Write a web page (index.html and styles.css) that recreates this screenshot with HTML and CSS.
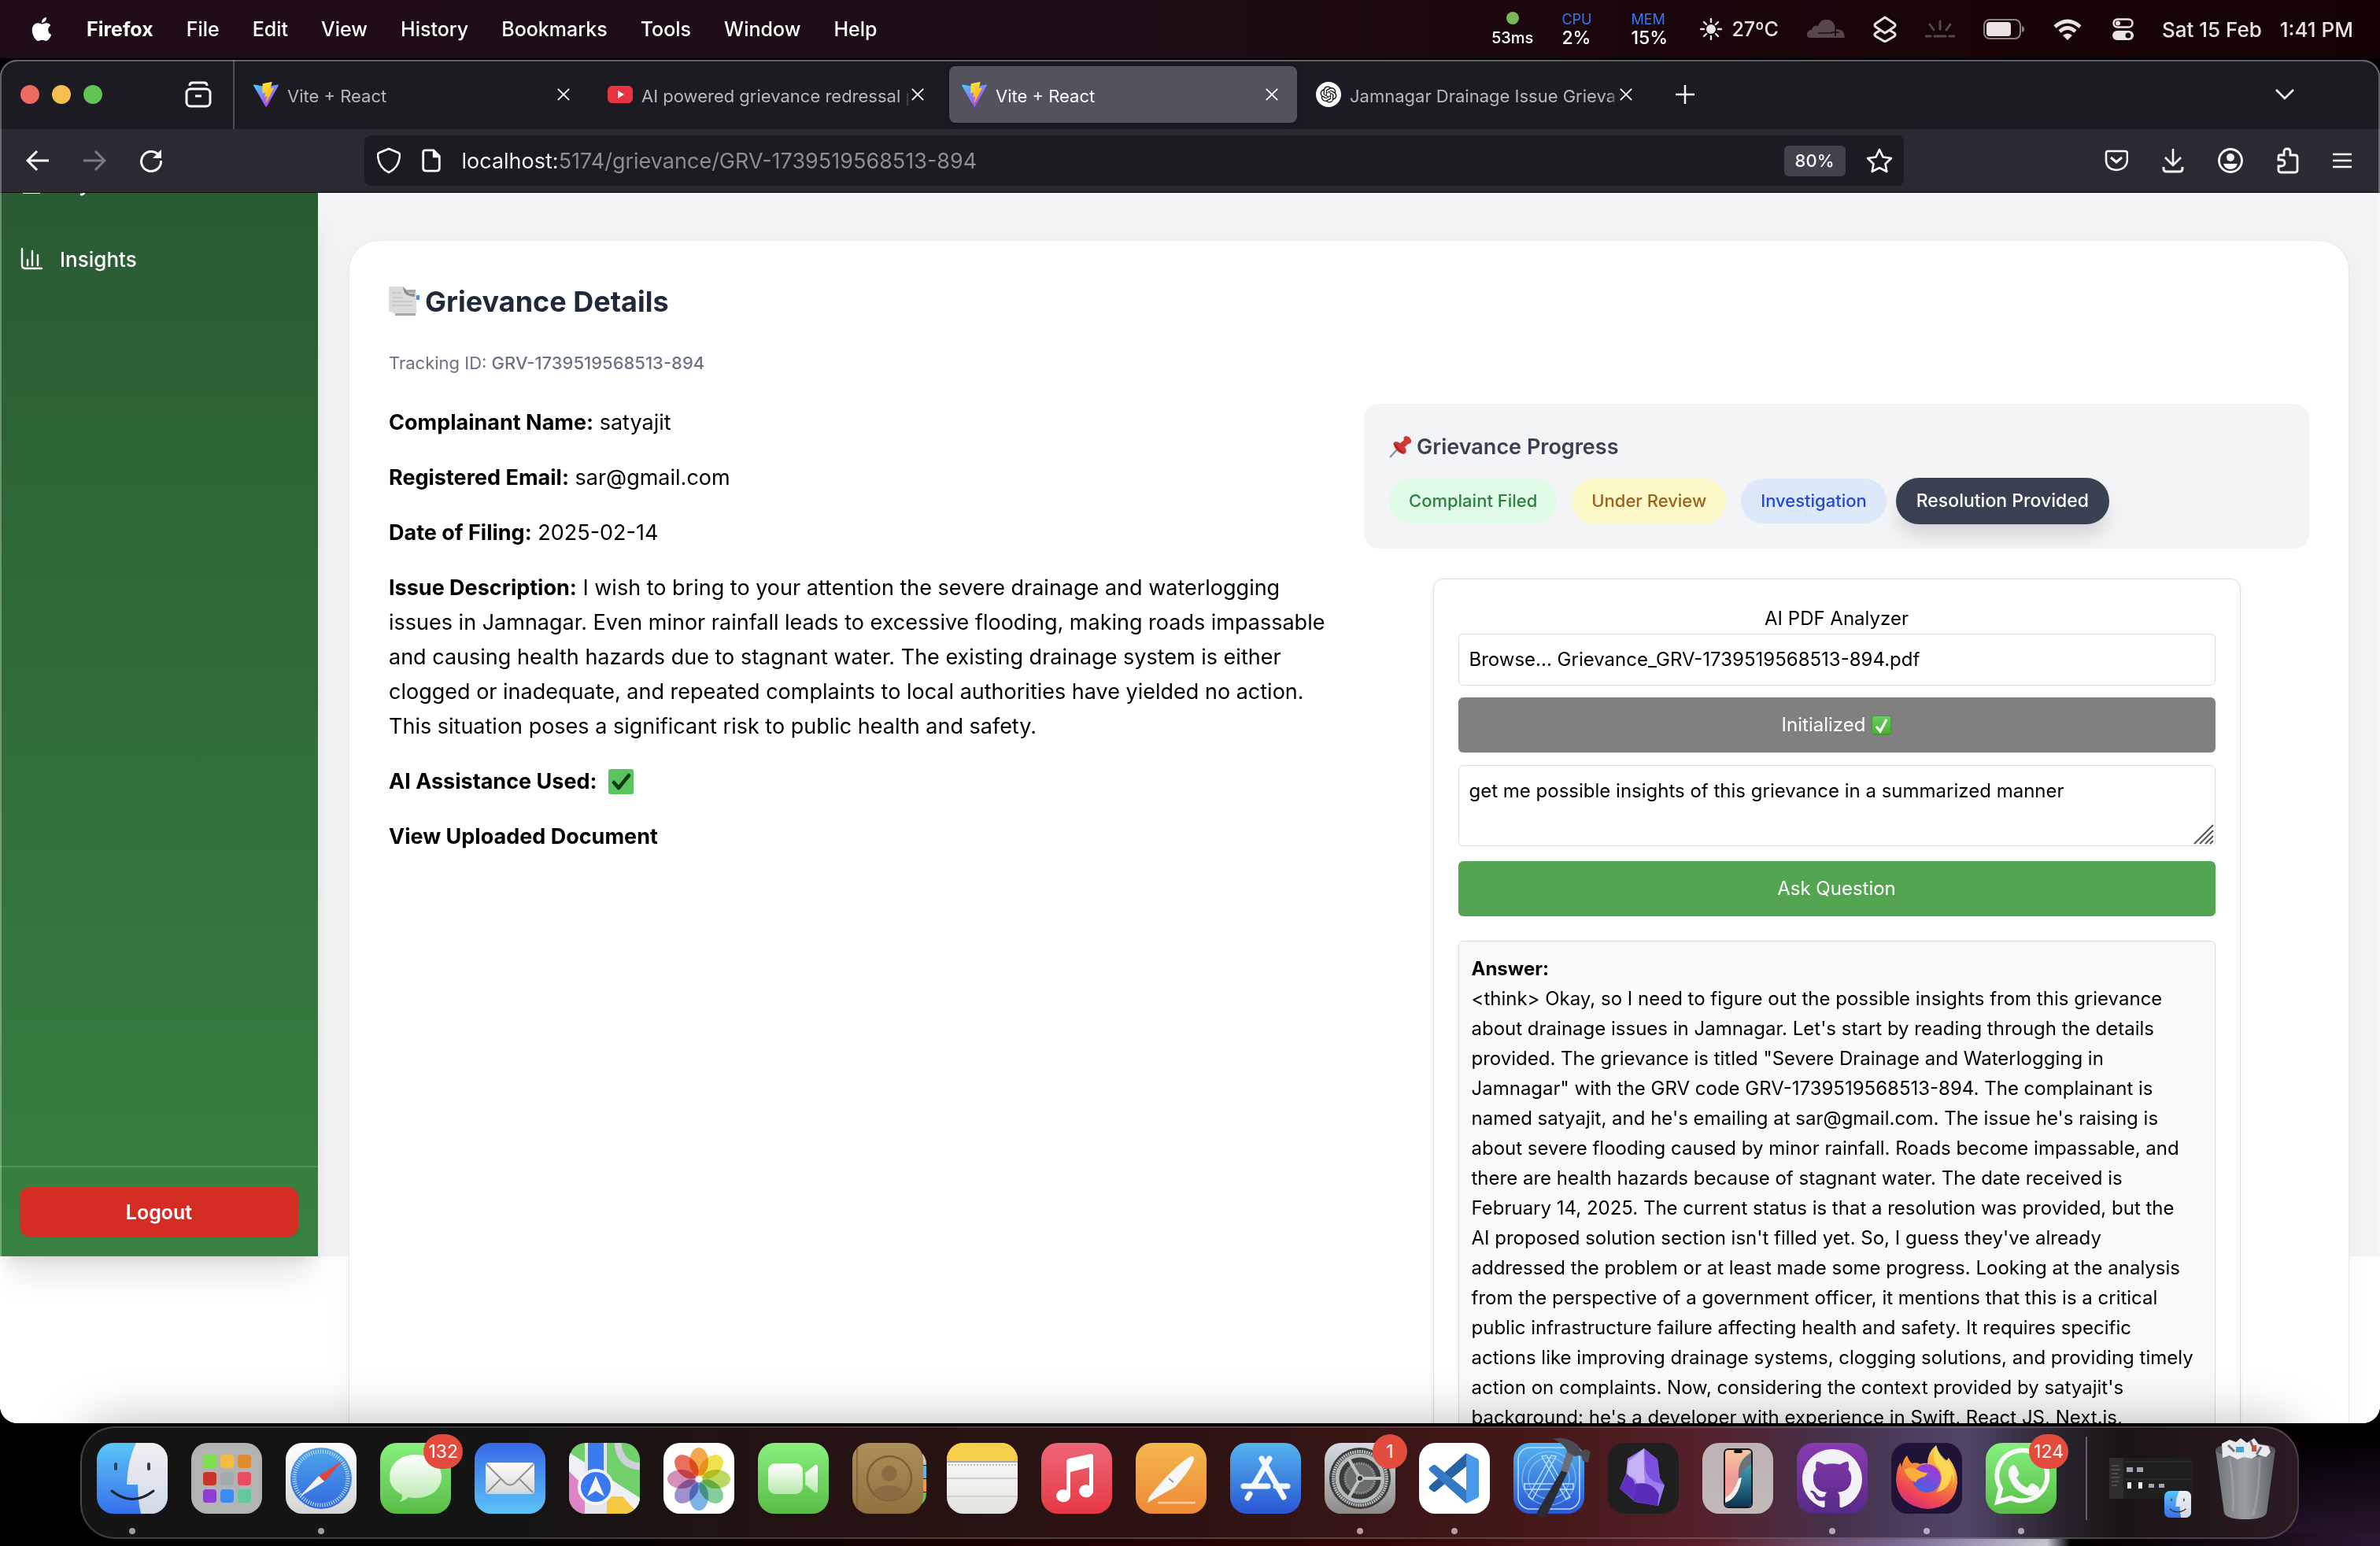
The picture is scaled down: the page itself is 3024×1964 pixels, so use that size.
FILE: index.html
```html
<!DOCTYPE html>
<html lang="en">
<head>
<meta charset="utf-8">
<title>Vite + React</title>
<link rel="stylesheet" href="styles.css">
</head>
<body>
<svg class="defs" aria-hidden="true">
  <defs>
    <linearGradient id="vite-a" x1="0" y1="0" x2="0.7" y2="1"><stop offset="0" stop-color="#41d1ff"/><stop offset="1" stop-color="#bd34fe"/></linearGradient>
    <linearGradient id="vite-b" x1="0.4" y1="0" x2="0.6" y2="1"><stop offset="0" stop-color="#ffea83"/><stop offset="0.1" stop-color="#ffdd35"/><stop offset="1" stop-color="#ffa800"/></linearGradient>
    <symbol id="vite" viewBox="0 0 256 257">
      <path fill="url(#vite-a)" d="M255.153 37.938L134.897 252.976c-2.483 4.44-8.862 4.466-11.382.048L.875 37.958c-2.746-4.814 1.371-10.646 6.827-9.67l120.385 21.517a6.537 6.537 0 0 0 2.322-.004l117.867-21.483c5.438-.991 9.574 4.796 6.877 9.62Z"/>
      <path fill="url(#vite-b)" d="M185.432.063L96.44 17.501a3.268 3.268 0 0 0-2.634 3.014l-5.474 92.456a3.268 3.268 0 0 0 3.997 3.378l24.777-5.718c2.318-.535 4.413 1.507 3.936 3.838l-7.361 36.047c-.495 2.426 1.782 4.5 4.151 3.78l15.304-4.649c2.372-.72 4.652 1.36 4.15 3.788l-11.698 56.621c-.732 3.542 3.979 5.473 5.943 2.437l1.313-2.028l72.516-144.72c1.215-2.423-.88-5.186-3.54-4.672l-25.505 4.922c-2.396.462-4.435-1.77-3.759-4.114l16.646-57.705c.677-2.35-1.37-4.583-3.769-4.113Z"/>
    </symbol>
    <symbol id="close" viewBox="0 0 20 20"><path d="M2 2l16 16M18 2L2 18" stroke="#fbfbfe" stroke-width="2" fill="none"/></symbol>
    <linearGradient id="sky" x1="0" y1="0" x2="0" y2="1"><stop offset="0" stop-color="#5bc5f8"/><stop offset="1" stop-color="#376fea"/></linearGradient>
    <linearGradient id="pale" x1="0" y1="0" x2="0" y2="1"><stop offset="0" stop-color="#f1f0f1"/><stop offset="1" stop-color="#d0d9e7"/></linearGradient>
    <symbol id="finder" viewBox="0 0 90 90">
      <path fill="url(#sky)" d="M0 0h90v90H0z"/>
      <path fill="url(#pale)" d="M50 0h40v90H56q-4-18-4-37H38Q39 22 50 0z"/>
      <path d="M24 27v6M66 27v6" stroke="#333c48" stroke-width="4" stroke-linecap="round"/>
      <path d="M19 61q26 21 53 0" fill="none" stroke="#16222e" stroke-width="3" stroke-linecap="round"/>
    </symbol>
    <linearGradient id="white-fade" x1="0" y1="0" x2="0" y2="1"><stop offset="0" stop-color="#fff"/><stop offset="1" stop-color="#b9e9ae"/></linearGradient>
    <linearGradient id="envelope" x1="0" y1="0" x2="0" y2="1"><stop offset="0" stop-color="#fff"/><stop offset="1" stop-color="#d5d5d6"/></linearGradient>
    <linearGradient id="dial" x1="0" y1="0" x2="0" y2="1"><stop offset="0" stop-color="#4ba5ea"/><stop offset="1" stop-color="#3569de"/></linearGradient>
    <linearGradient id="phone" x1="0" y1="0" x2="0" y2="1"><stop offset="0" stop-color="#f7c8a2"/><stop offset="0.5" stop-color="#ee9896"/><stop offset="1" stop-color="#f3a9a0"/></linearGradient>
    <linearGradient id="phone-b" x1="0" y1="0" x2="0" y2="1"><stop offset="0" stop-color="#4fc0cf"/><stop offset="1" stop-color="#0e3454"/></linearGradient>
    <linearGradient id="fox" x1="0.8" y1="0" x2="0.3" y2="1"><stop offset="0" stop-color="#fde455"/><stop offset="0.45" stop-color="#f78a35"/><stop offset="0.8" stop-color="#ee4455"/><stop offset="1" stop-color="#d32f7a"/></linearGradient>
    <linearGradient id="globe" x1="0.7" y1="0" x2="0.3" y2="1"><stop offset="0" stop-color="#a936d6"/><stop offset="1" stop-color="#4463dd"/></linearGradient>
    <linearGradient id="bin" x1="0" y1="0" x2="1" y2="0"><stop offset="0" stop-color="#6f7476"/><stop offset="0.5" stop-color="#9a9ea0"/><stop offset="1" stop-color="#5d6163"/></linearGradient>
    <linearGradient id="cell" x1="0" y1="0" x2="0" y2="1"><stop offset="0" stop-color="#65cf68"/><stop offset="1" stop-color="#51ac33"/></linearGradient>
  </defs>
</svg>

<header class="menubar">
  <nav class="menus" aria-label="Application menu">
    <button class="menu apple" aria-label="Apple menu"><svg viewBox="0 0 24 24" width="30" height="32"><path fill="#fff" d="M12.152 6.896c-.948 0-2.415-1.078-3.96-1.04-2.04.027-3.91 1.183-4.961 3.014-2.117 3.675-.546 9.103 1.519 12.09 1.013 1.454 2.208 3.09 3.792 3.039 1.52-.065 2.09-.987 3.935-.987 1.831 0 2.35.987 3.96.948 1.637-.026 2.676-1.48 3.676-2.948 1.156-1.688 1.636-3.325 1.662-3.415-.039-.013-3.182-1.221-3.22-4.857-.026-3.04 2.48-4.494 2.597-4.559-1.429-2.09-3.623-2.324-4.39-2.376-2-.156-3.675 1.09-4.61 1.09zM15.53 3.83c.843-1.012 1.4-2.427 1.245-3.83-1.207.052-2.662.805-3.532 1.818-.78.896-1.454 2.338-1.273 3.714 1.338.104 2.715-.688 3.559-1.701"/></svg></button>
    <button class="menu menu-app">Firefox</button>
    <button class="menu">File</button>
    <button class="menu">Edit</button>
    <button class="menu">View</button>
    <button class="menu">History</button>
    <button class="menu">Bookmarks</button>
    <button class="menu">Tools</button>
    <button class="menu">Window</button>
    <button class="menu">Help</button>
  </nav>
  <div class="status">
    <div class="stat stat-ping"><span class="ping-dot"></span><span class="ping">53ms</span></div>
    <div class="stat"><span class="stat-name">CPU</span><span class="stat-value">2%</span></div>
    <div class="stat"><span class="stat-name">MEM</span><span class="stat-value">15%</span></div>
    <div class="weather">
      <svg width="28" height="28" viewBox="0 0 28 28"><circle cx="14" cy="14" r="6" fill="#e9e3e4"/><path d="M14 1v4M14 23v4M1 14h4M23 14h4M5 5l3 3M20 20l3 3M5 23l3-3M20 8l3-3" stroke="#e9e3e4" stroke-width="2.4" stroke-linecap="round"/></svg>
      <span>27ºC</span>
    </div>
    <svg width="48" height="24" viewBox="0 0 48 24"><path fill="#55484b" d="M4 23a4 4 0 0 1-3-7 4 4 0 0 1 5-3A6 6 0 0 1 14 8a11 11 0 0 1 21-1l1 5q10 0 11 6l1 5z"/><path d="M14 17h18M36 11v10M31 16h10" stroke="#1c080d" stroke-width="1.6"/></svg>
    <svg width="30" height="34" viewBox="0 0 30 34"><g fill="none" stroke="#e9e3e4" stroke-width="3" stroke-linejoin="round"><path d="M15 2l12 8q2 2 0 4l-12 8-12-8q-2-2 0-4z"/><path d="M10 18l-7 4q-2 2 0 4l12 7 12-7q2-2 0-4l-7-4"/></g></svg>
    <svg width="38" height="24" viewBox="0 0 38 24"><path d="M19 2v10M6 6l5 7M32 6l-5 7M1 21h6M12 21h14M31 21h6" stroke="#55484b" stroke-width="3" stroke-linecap="round"/></svg>
    <svg width="52" height="26" viewBox="0 0 52 26"><rect x="1" y="1" width="46" height="24" rx="7" fill="none" stroke="#8a7f82" stroke-width="2"/><rect x="4" y="4" width="31" height="18" rx="4" fill="#e9e3e4"/><path d="M49 9q3 1 3 4t-3 4z" fill="#8a7f82"/></svg>
    <svg width="40" height="28" viewBox="0 0 40 28"><g fill="none" stroke="#e9e3e4" stroke-width="4.6"><path d="M3 11q16-14 32 0"/><path d="M9 17q10-9 20 0"/></g><path fill="#e9e3e4" d="M13 22q6-5 12 0l-6 6z"/></svg>
    <svg width="27" height="28" viewBox="0 0 27 28"><rect x="1.500" y="1.500" width="24" height="10" rx="5" fill="none" stroke="#e9e3e4" stroke-width="2.500"/><circle cx="7" cy="6.500" r="3" fill="#e9e3e4"/><rect y="16" width="27" height="12" rx="6" fill="#e9e3e4"/><circle cx="20" cy="22" r="3.500" fill="#1c080d"/></svg>
    <time class="clock"><span>Sat 15 Feb</span><span>1:41 PM</span></time>
  </div>
</header>

<div class="window">
  <div class="tabbar">
    <div class="lights"><span class="light light-red"></span><span class="light light-yellow"></span><span class="light light-green"></span></div>
    <button class="icon-btn view-btn" aria-label="Firefox View"><svg width="34" height="34" viewBox="0 0 34 34"><path d="M6 6q0-4 4-4h14q4 0 4 4" fill="none" stroke="#fbfbfe" stroke-width="3"/><rect x="2" y="10" width="30" height="22" rx="5" fill="none" stroke="#fbfbfe" stroke-width="3"/><path d="M13 19h8" stroke="#fbfbfe" stroke-width="3"/></svg></button>
    <div class="tabs" role="tablist">
      <div class="tab" role="tab"><svg width="32" height="32"><use href="#vite"/></svg><span class="tab-title">Vite + React</span><button class="tab-close" aria-label="Close tab"><svg width="18" height="18"><use href="#close"/></svg></button></div>
      <div class="tab" role="tab"><svg width="32" height="24" viewBox="0 0 32 24"><rect y="1" width="32" height="22" rx="6" fill="#ea3340"/><path d="M13 7l8 5-8 5z" fill="#fff"/></svg><span class="tab-title">AI powered grievance redressal p</span><button class="tab-close" aria-label="Close tab"><svg width="18" height="18"><use href="#close"/></svg></button></div>
      <div class="tab tab-active" role="tab" aria-selected="true"><svg width="32" height="32"><use href="#vite"/></svg><span class="tab-title">Vite + React</span><button class="tab-close" aria-label="Close tab"><svg width="18" height="18"><use href="#close"/></svg></button></div>
      <div class="tab" role="tab"><svg width="32" height="32" viewBox="0 0 32 32"><circle cx="16" cy="16" r="16" fill="#fff"/><path transform="translate(5.500 5.500) scale(.875)" fill="#111" d="M22.2819 9.8211a5.9847 5.9847 0 0 0-.5157-4.9108 6.0462 6.0462 0 0 0-6.5098-2.9A6.0651 6.0651 0 0 0 4.9807 4.1818a5.9847 5.9847 0 0 0-3.9977 2.9 6.0462 6.0462 0 0 0 .7427 7.0966 5.98 5.98 0 0 0 .511 4.9107 6.051 6.051 0 0 0 6.5146 2.9001A5.9847 5.9847 0 0 0 13.2599 24a6.0557 6.0557 0 0 0 5.7718-4.2058 5.9894 5.9894 0 0 0 3.9977-2.9001 6.0557 6.0557 0 0 0-.7475-7.0729zm-9.022 12.6081a4.4755 4.4755 0 0 1-2.8764-1.0408l.1419-.0804 4.7783-2.7582a.7948.7948 0 0 0 .3927-.6813v-6.7369l2.02 1.1686a.071.071 0 0 1 .038.052v5.5826a4.504 4.504 0 0 1-4.4945 4.4944zm-9.6607-4.1254a4.4708 4.4708 0 0 1-.5346-3.0137l.142.0852 4.783 2.7582a.7712.7712 0 0 0 .7806 0l5.8428-3.3685v2.3324a.0804.0804 0 0 1-.0332.0615L9.74 19.9502a4.4992 4.4992 0 0 1-6.1408-1.6464zM2.3408 7.8956a4.485 4.485 0 0 1 2.3655-1.9728V11.6a.7664.7664 0 0 0 .3879.6765l5.8144 3.3543-2.0201 1.1685a.0757.0757 0 0 1-.071 0l-4.8303-2.7865A4.504 4.504 0 0 1 2.3408 7.872zm16.5963 3.8558L13.1038 8.364 15.1192 7.2a.0757.0757 0 0 1 .071 0l4.8303 2.7913a4.4944 4.4944 0 0 1-.6765 8.1042v-5.6772a.79.79 0 0 0-.407-.667zm2.0107-3.0231l-.142-.0852-4.7735-2.7818a.7759.7759 0 0 0-.7854 0L9.409 9.2297V6.8974a.0662.0662 0 0 1 .0284-.0615l4.8303-2.7866a4.4992 4.4992 0 0 1 6.6802 4.66zM8.3065 12.863l-2.02-1.1638a.0804.0804 0 0 1-.038-.0567V6.0742a4.4992 4.4992 0 0 1 7.3757-3.4537l-.142.0805L8.704 5.459a.7948.7948 0 0 0-.3927.6813zm1.0976-2.3654l2.602-1.4998 2.6069 1.4998v2.9994l-2.5974 1.4997-2.6067-1.4997Z"/></svg><span class="tab-title">Jamnagar Drainage Issue Grieva</span><button class="tab-close" aria-label="Close tab"><svg width="18" height="18"><use href="#close"/></svg></button></div>
    </div>
    <button class="icon-btn" aria-label="New tab"><svg width="26" height="26" viewBox="0 0 26 26"><path d="M13 1v24M1 13h24" stroke="#fbfbfe" stroke-width="2.500"/></svg></button>
    <button class="icon-btn all-tabs" aria-label="List all tabs"><svg width="26" height="16" viewBox="0 0 26 16"><path d="M2 2l11 11L24 2" fill="none" stroke="#fbfbfe" stroke-width="2.500"/></svg></button>
  </div>

  <div class="navbar">
    <div class="nav-history">
      <button class="icon-btn" aria-label="Back"><svg width="30" height="28" viewBox="0 0 30 28"><path d="M29 14H2M14 2L2 14l12 12" fill="none" stroke="#fbfbfe" stroke-width="3"/></svg></button>
      <button class="icon-btn" aria-label="Forward" disabled><svg width="30" height="28" viewBox="0 0 30 28"><path d="M1 14h27M16 2l12 12-12 12" fill="none" stroke="#7b7a82" stroke-width="3"/></svg></button>
      <button class="icon-btn" aria-label="Reload"><svg width="30" height="30" viewBox="0 0 30 30"><path d="M26 10A12.500 12.500 0 1 0 27.500 15" fill="none" stroke="#fbfbfe" stroke-width="3"/><path fill="#fbfbfe" d="M28 1v11H17z"/></svg></button>
    </div>
    <div class="urlbar">
      <svg width="30" height="34" viewBox="0 0 30 34"><path d="M15 2l12 5q2 1 2 3-1 16-14 22Q2 26 1 10q0-2 2-3z" fill="none" stroke="#fbfbfe" stroke-width="2.600" stroke-linejoin="round"/></svg>
      <svg width="26" height="30" viewBox="0 0 26 32"><path d="M5 2h11l8 8v16q0 4-4 4H6q-4 0-4-4V5q0-3 3-3z" fill="none" stroke="#fbfbfe" stroke-width="3"/><path d="M15 2v10h9z" fill="#fbfbfe"/></svg>
      <input class="url" type="text" aria-label="Address" value="localhost:5174/grievance/GRV-1739519568513-894">
      <button class="zoom-badge">80%</button>
      <button class="icon-btn" aria-label="Bookmark this page"><svg width="34" height="32" viewBox="0 0 34 32"><path d="M17 2l4.500 9.500L32 13l-7.500 7.300L26.300 30 17 25.200 7.700 30l1.800-9.700L2 13l10.500-1.500z" fill="none" stroke="#fbfbfe" stroke-width="2.600" stroke-linejoin="round"/></svg></button>
    </div>
    <div class="nav-tools">
      <button class="icon-btn" aria-label="Save to Pocket"><svg width="30" height="28" viewBox="0 0 30 28"><path d="M4 2h22q3 0 3 3v8Q28 25 15 26 2 25 2 13V5q0-3 2-3z" fill="none" stroke="#fbfbfe" stroke-width="2.600"/><path d="M8 10l7 6 7-6" fill="none" stroke="#fbfbfe" stroke-width="3"/></svg></button>
      <button class="icon-btn" aria-label="Downloads"><svg width="28" height="32" viewBox="0 0 28 32"><path d="M14 1v20M4 12l10 10 10-10" fill="none" stroke="#fbfbfe" stroke-width="2.600"/><path d="M2 24v2q0 4 4 4h16q4 0 4-4v-2" fill="none" stroke="#fbfbfe" stroke-width="3"/></svg></button>
      <button class="icon-btn" aria-label="Account"><svg width="32" height="32" viewBox="0 0 32 32"><circle cx="16" cy="16" r="14.500" fill="none" stroke="#fbfbfe" stroke-width="2.800"/><circle cx="16" cy="12" r="5" fill="#fbfbfe"/><path d="M7 20h18q-2 7-9 7t-9-7z" fill="#fbfbfe"/></svg></button>
      <button class="icon-btn" aria-label="Extensions"><svg width="28" height="34" viewBox="0 0 28 34"><path d="M3 10h6V6q0-4 4-4t4 4v4h6q3 0 3 3v16q0 3-3 3H5q-3 0-3-3v-5h3q5 0 5-4t-5-4H2v-3q0-3 1-3z" fill="none" stroke="#fbfbfe" stroke-width="2.800"/></svg></button>
      <button class="icon-btn" aria-label="Open application menu"><svg width="24" height="20" viewBox="0 0 24 20"><path d="M0 2h24M0 10h24M0 18h24" stroke="#fbfbfe" stroke-width="2.600"/></svg></button>
    </div>
  </div>

  <div class="viewport">
    <div class="app">
      <aside class="sidebar">
        <nav class="side-nav">
          <a class="side-link" href="#my"><svg width="28" height="28" viewBox="0 0 28 28"><path d="M4 2h20v24H4z" fill="none" stroke="#fff" stroke-width="2"/></svg>My</a>
          <a class="side-link" href="#insights"><svg width="28" height="28" viewBox="0 0 28 28"><path d="M2 1v21q0 4 4 4h21M9 22v-7M15 22V4M22 22V9" fill="none" stroke="#fff" stroke-width="2.400" stroke-linecap="round"/></svg>Insights</a>
        </nav>
        <div class="side-foot"><button class="logout">Logout</button></div>
      </aside>
      <main class="main">
        <article class="card">
          <h1 class="title"><svg width="40" height="40" viewBox="0 0 40 40"><path d="M8 5h26v33H8z" fill="#a9a9a9"/><path d="M35 12h4v6h-4zM31 22h4v7h-4z" fill="#4a90e2"/><path d="M0 1h18l8 8h9v26H6L0 32z" fill="#dcdcdc"/><path d="M18 1q1 8 4 10t11 3v-4h-7q-5-6-8-9z" fill="#8c8c8c"/><path d="M4 9h12M4 15h14M4 20h26M4 25h26" stroke="#c8c8c8" stroke-width="2"/></svg>Grievance Details</h1>
          <p class="tracking">Tracking ID: <span class="tracking-id">GRV-1739519568513-894</span></p>
          <div class="columns">
            <section class="facts">
              <p><strong>Complainant Name:</strong> satyajit</p>
              <p><strong>Registered Email:</strong> sar@gmail.com</p>
              <p><strong>Date of Filing:</strong> 2025-02-14</p>
              <p><strong>Issue Description:</strong> I wish to bring to your attention the severe drainage and waterlogging issues in Jamnagar. Even minor rainfall leads to excessive flooding, making roads impassable and causing health hazards due to stagnant water. The existing drainage system is either clogged or inadequate, and repeated complaints to local authorities have yielded no action. This situation poses a significant risk to public health and safety.</p>
              <p class="ai-used"><strong>AI Assistance Used:</strong> <svg width="32" height="32" viewBox="0 0 32 32"><rect width="32" height="32" rx="3" fill="#5ac45f"/><path d="M7 17l6 7L26 8" fill="none" stroke="#123a12" stroke-width="4.500" stroke-linecap="round" stroke-linejoin="round"/></svg></p>
              <p><a class="doc-link" href="#document">View Uploaded Document</a></p>
            </section>
            <section class="side">
              <div class="progress">
                <h2 class="progress-title"><svg width="30" height="28" viewBox="0 0 30 28"><path d="M13 14L1 27" stroke="#8d979e" stroke-width="2.500"/><path d="M5 9q4-4 9 0l5-4q-2-4 2-5 5 0 7 5 1 5-4 5l-4 4q4 6-1 9Q9 22 5 9z" fill="#cf3a35"/><path d="M7 10q4 8 11 11" stroke="#a02622" stroke-width="2" fill="none"/></svg>Grievance Progress</h2>
                <div class="chips">
                  <span class="chip chip-green">Complaint Filed</span>
                  <span class="chip chip-yellow">Under Review</span>
                  <span class="chip chip-blue">Investigation</span>
                  <span class="chip chip-current">Resolution Provided</span>
                </div>
              </div>
              <div class="analyzer">
                <h2 class="analyzer-title">AI PDF Analyzer</h2>
                <label class="field file"><input class="file-input" type="file" accept="application/pdf">Browse... Grievance_GRV-1739519568513-894.pdf</label>
                <button class="btn btn-done">Initialized <svg width="25" height="25" viewBox="0 0 25 25"><rect width="25" height="25" rx="4" fill="#3f9f28"/><rect x="1" y="1" width="23" height="22" rx="3" fill="url(#cell)"/><path d="M6 14l5 6 8-15" fill="none" stroke="#fff" stroke-width="3"/></svg></button>
                <div class="question">
                  <textarea class="field question-text" aria-label="Question">get me possible insights of this grievance in a summarized manner</textarea>
                  <svg class="grip" width="26" height="26" viewBox="0 0 26 26"><path d="M1 25L25 1M8 25L25 8M15 25l10-10M21 25l4-4" stroke="#555" stroke-width="2"/></svg>
                </div>
                <button class="btn btn-ask">Ask Question</button>
                <div class="answer">
                  <strong>Answer:</strong>
                  <p>&lt;think&gt; Okay, so I need to figure out the possible insights from this grievance about drainage issues in Jamnagar. Let's start by reading through the details provided. The grievance is titled "Severe Drainage and Waterlogging in Jamnagar" with the GRV code GRV-1739519568513-894. The complainant is named satyajit, and he's emailing at sar@gmail.com. The issue he's raising is about severe flooding caused by minor rainfall. Roads become impassable, and there are health hazards because of stagnant water. The date received is February 14, 2025. The current status is that a resolution was provided, but the AI proposed solution section isn't filled yet. So, I guess they've already addressed the problem or at least made some progress. Looking at the analysis from the perspective of a government officer, it mentions that this is a critical public infrastructure failure affecting health and safety. It requires specific actions like improving drainage systems, clogging solutions, and providing timely action on complaints. Now, considering the context provided by satyajit's background: he's a developer with experience in Swift, React JS, Next.js,</p>
                </div>
              </div>
            </section>
          </div>
        </article>
      </main>
    </div>
  </div>
</div>

<footer class="dock">
  <div class="dock-apps">
    <button class="dock-item running" aria-label="Finder"><svg class="tile" viewBox="0 0 90 90"><use href="#finder"/></svg></button>
    <button class="dock-item" aria-label="Launchpad"><svg class="tile bg-gray" viewBox="0 0 90 90"><g><rect x="15" y="15" width="17" height="17" rx="4" fill="#7ee04f"/><rect x="37" y="15" width="17" height="17" rx="4" fill="#f2bd43"/><rect x="59" y="15" width="17" height="17" rx="4" fill="#e38b33"/><rect x="15" y="37" width="17" height="17" rx="4" fill="#c5352a"/><rect x="37" y="37" width="17" height="17" rx="4" fill="#a4abad"/><rect x="59" y="37" width="17" height="17" rx="4" fill="#e64d63"/><rect x="15" y="59" width="17" height="17" rx="4" fill="#8d3fce"/><rect x="37" y="59" width="17" height="17" rx="4" fill="#3d8bf0"/><rect x="59" y="59" width="17" height="17" rx="4" fill="#62c99c"/></g></svg></button>
    <button class="dock-item running" aria-label="Safari"><svg class="tile bg-silver" viewBox="0 0 90 90"><circle cx="45" cy="45" r="39" fill="url(#dial)"/><circle cx="45" cy="45" r="34" fill="none" stroke="#d5e6fa" stroke-width="5" stroke-dasharray="1 2"/><path d="M73 22L42 42l7 7z" fill="#e2453a"/><path d="M17 69l25-27 7 7z" fill="#f2f2f2"/></svg></button>
    <button class="dock-item" aria-label="Messages"><svg class="tile bg-green" viewBox="0 0 90 90"><path d="M45 15c19 0 33 12 33 28S64 70 45 70q-5 0-9-1-5 5-12 6 5-4 4-9-16-8-16-23c0-16 14-28 33-28z" fill="url(#white-fade)"/></svg><span class="badge">132</span></button>
    <button class="dock-item" aria-label="Mail"><svg class="tile bg-mail" viewBox="0 0 90 90"><rect x="14" y="25" width="62" height="40" rx="4" fill="url(#envelope)"/><path d="M16 63l18-18M74 63L56 45M15 27l24 24q6 5 12 0l24-24" fill="none" stroke="#8e9297" stroke-width="2"/></svg></button>
    <button class="dock-item" aria-label="Maps"><svg class="tile" viewBox="0 0 90 90"><path d="M0 0h90v90H0z" fill="#72cf6d"/><path d="M0 12v26l20 18v34h30l40 0V70z" fill="#eff0f4"/><path d="M0 36l20 20v34H0z" fill="#dd83c6"/><path d="M48 68h20l20 22H48z" fill="#f5c842"/><path d="M48 45l42 25v12z" fill="#eff0f4"/><path d="M20 0h28v90H20z" fill="#e6e7ec"/><path d="M24 0h20v45H24z" fill="#3b7bf0"/><path d="M62 0q2 28 28 30" fill="none" stroke="#cfd1da" stroke-width="9"/><circle cx="34" cy="56" r="21" fill="#3878f0" stroke="#f4f4f6" stroke-width="4"/><path d="M34 42l11 26-11-7-11 7z" fill="#f6f6f6"/></svg></button>
    <button class="dock-item" aria-label="Photos"><svg class="tile bg-white" viewBox="0 0 90 90"><g class="petals"><ellipse cx="45" cy="24" rx="12" ry="18" fill="#f3a03c"/><ellipse cx="45" cy="24" rx="12" ry="18" fill="#efdf3f" transform="rotate(45 45 46)"/><ellipse cx="45" cy="24" rx="12" ry="18" fill="#b8d455" transform="rotate(90 45 46)"/><ellipse cx="45" cy="24" rx="12" ry="18" fill="#7cc791" transform="rotate(135 45 46)"/><ellipse cx="45" cy="24" rx="12" ry="18" fill="#73aee2" transform="rotate(180 45 46)"/><ellipse cx="45" cy="24" rx="12" ry="18" fill="#9a86c8" transform="rotate(225 45 46)"/><ellipse cx="45" cy="24" rx="12" ry="18" fill="#cf86b2" transform="rotate(270 45 46)"/><ellipse cx="45" cy="24" rx="12" ry="18" fill="#ea6350" transform="rotate(315 45 46)"/></g></svg></button>
    <button class="dock-item" aria-label="FaceTime"><svg class="tile bg-green" viewBox="0 0 90 90"><rect x="13" y="26" width="44" height="39" rx="9" fill="url(#white-fade)"/><path d="M60 38l13-10q3-1 3 2v31q0 3-3 2L60 53z" fill="url(#white-fade)"/></svg></button>
    <button class="dock-item" aria-label="Contacts"><svg class="contact-tabs" viewBox="0 0 12 72"><path d="M0 2q8 4 8 16H0z" fill="#c3c6c9"/><path d="M0 19h8v16H0z" fill="#5ab5ee"/><path d="M0 36h8v16H0z" fill="#f39a36"/><path d="M0 53h8q0 12-8 16z" fill="#62c94f"/></svg><svg class="tile bg-contacts" viewBox="0 0 90 90"><path d="M6 0v90" stroke="#86683f" stroke-width="2"/><circle cx="47" cy="45" r="28" fill="none" stroke="#7d6039" stroke-width="2.500"/><circle cx="47" cy="39" r="10" fill="#8b6c42"/><path d="M26 63q6-9 21-9t21 9q-8 10-21 10t-21-10z" fill="#8b6c42"/></svg></button>
    <button class="dock-item" aria-label="Notes"><svg class="tile bg-notes" viewBox="0 0 90 90"><path d="M0 0h90v23H0z" fill="#f7cd4c"/><path d="M0 24h90" stroke="#a9a9a6" stroke-width="2"/><path d="M2 28h88" stroke="#b9b9b6" stroke-width="2" stroke-dasharray="2 2"/><path d="M0 45h90M0 68h90" stroke="#cfcfd2" stroke-width="2"/></svg></button>
    <button class="dock-item" aria-label="Music"><svg class="tile bg-music" viewBox="0 0 90 90"><path d="M32 24q0-3 3-4l28-6q3 0 3 3v45a9 8 0 1 1-5-8V31l-24 6v30a9 8 0 1 1-5-7z" fill="#fff"/></svg></button>
    <button class="dock-item" aria-label="Pages"><svg class="tile bg-orange" viewBox="0 0 90 90"><path d="M28 76h48" stroke="#f9cf9c" stroke-width="2.500"/><path d="M68 18q6-3 6 3-4 13-24 35L20 73l-5 3 2-7Q44 34 68 18z" fill="#f7f7f5"/><path d="M42 45l6 5" stroke="#999" stroke-width="2"/></svg></button>
    <button class="dock-item" aria-label="App Store"><svg class="tile bg-blue" viewBox="0 0 90 90"><g stroke="#f5f9ff" stroke-width="7" stroke-linecap="round"><path d="M50 20L30 54M40 20l28 49M17 55h31M58 55h15M25 65l-3 5"/></g></svg></button>
    <button class="dock-item running" aria-label="System Settings"><svg class="tile bg-settings" viewBox="0 0 90 90"><circle cx="45" cy="45" r="39" fill="#3c3c3c"/><circle cx="45" cy="45" r="34" fill="none" stroke="#b9bec0" stroke-width="4" stroke-dasharray="2 1"/><circle cx="45" cy="45" r="29" fill="none" stroke="#b4babc" stroke-width="5"/><circle cx="45" cy="45" r="19" fill="#6b6c6c" stroke="#8b8f91" stroke-width="3" stroke-dasharray="2 1"/><path d="M45 45h28M45 45L31 21M45 45L31 69" stroke="#c0c5c7" stroke-width="4"/><circle cx="45" cy="45" r="4" fill="#333" stroke="#c0c5c7" stroke-width="2"/></svg><span class="badge">1</span></button>
    <button class="dock-item running" aria-label="Visual Studio Code"><svg class="tile bg-white" viewBox="0 0 90 90"><path d="M14 54q-3 3 0 5l4 3q2 1 4-1l38-31V13z" fill="#2862a4"/><path d="M14 36q-3-3 0-5l4-3q2-1 4 1l38 31v17z" fill="#3578c5"/><path d="M60 13l14 7q2 1 2 3v44q0 2-2 3l-14 7z" fill="#4a99e8"/></svg></button>
    <button class="dock-item" aria-label="Xcode"><svg class="tile bg-blue" viewBox="0 0 90 90"><g fill="none" stroke="#b9ddf8" stroke-width="1.500"><rect x="6" y="6" width="78" height="78" rx="15"/><circle cx="45" cy="45" r="34" opacity=".5"/><circle cx="45" cy="45" r="26" opacity=".5"/><path d="M14 52h62v7H14zM36 17l6-1 30 53-5 3zM54 17l-6-1-29 52 5 4z"/></g></svg><svg class="hammer" viewBox="0 0 104 104"><path d="M63 44l8 2-27 56q-6 4-11 0-2-3 0-7z" fill="#2b2c33"/><path d="M70 20l9 3-8 24-9-3z" fill="#6d6f76"/><path d="M52 4q18-4 32 8l4 8 5-3 7 3-3 14-7-2-2-7-8 1-9-5q-3-10-19-17z" fill="#494b52"/></svg></button>
    <button class="dock-item" aria-label="Obsidian"><svg class="tile bg-black" viewBox="0 0 90 90"><path d="M46 7l17 14 3 24 6 9-8 26-29-5-20-17 8-18 2-20z" fill="#9c7cf0"/><path d="M46 7l17 14 3 24 6 9-6-3q-12-1-18-15z" fill="#7c50dc"/><path d="M46 7L26 24l-2 18q11 0 13 10h10q-2-25-1-45z" fill="#c5b2f4"/><path d="M24 39L15 58l20 16q3-12-2-26z" fill="#6030c4"/><path d="M35 52q22-4 30 14l-2 14-31-6q4-10 3-22z" fill="#5a2cba"/></svg></button>
    <button class="dock-item" aria-label="iPhone Mirroring"><svg class="tile bg-taupe" viewBox="0 0 90 90"><rect x="27" y="7" width="37" height="76" rx="6" fill="#1a1a1c"/><rect x="29" y="9" width="33" height="72" rx="4" fill="url(#phone)"/><path d="M62 12Q44 22 46 45 40 66 29 72v5q0 4 4 4h25q4 0 4-4z" fill="url(#phone-b)"/><path d="M62 13Q44 22 46 45q8-14 16-18z" fill="#6d7178"/><path d="M46 45Q40 64 29 70v6Q46 70 50 44z" fill="#f4f1ec"/><rect x="40" y="9" width="11" height="4" rx="2" fill="#111"/></svg></button>
    <button class="dock-item running" aria-label="GitHub Desktop"><svg class="tile bg-purple" viewBox="0 0 90 90"><path transform="translate(7 8) scale(4.750)" fill="#f1f1f6" d="M8 0C3.580 0 0 3.580 0 8c0 3.540 2.290 6.530 5.470 7.590.4.07.55-.17.55-.38 0-.19-.01-.82-.01-1.490-2.010.37-2.530-.49-2.690-.94-.09-.23-.48-.94-.82-1.130-.28-.15-.68-.52-.01-.53.63-.01 1.080.58 1.230.82.72 1.210 1.870.87 2.330.66.07-.52.28-.87.51-1.070-1.780-.2-3.640-.89-3.640-3.950 0-.87.31-1.590.82-2.150-.08-.2-.36-1.020.08-2.120 0 0 .67-.21 2.200.82.64-.18 1.320-.27 2-.27.68 0 1.360.09 2 .27 1.530-1.040 2.200-.82 2.200-.82.44 1.100.16 1.920.08 2.120.51.56.82 1.270.82 2.150 0 3.070-1.870 3.750-3.650 3.950.29.25.54.73.54 1.480 0 1.070-.01 1.930-.01 2.200 0 .21.15.46.55.38A8.013 8.013 0 0016 8c0-4.420-3.580-8-8-8z"/></svg></button>
    <button class="dock-item running" aria-label="Firefox"><svg class="tile bg-navy" viewBox="0 0 90 90"><path d="M20 16q2 6 6 10 6-2 11 1 4-2 9-1Q46 12 57 3q2 12 12 21l4-5q12 16 11 32Q81 82 46 84 8 80 6 47 7 30 12 25l1 6q2-10 7-15z" fill="url(#fox)"/><path d="M57 3q-8 18 4 30 8 12-4 30 18-4 20-24 3 6 0 18 8-18-4-33-12-7-16-21z" fill="#fde25a" opacity=".8"/><circle cx="45" cy="45" r="18" fill="url(#globe)"/><path d="M16 34q10-6 17 0 6 4 13 4-1 5-8 6-5 2-7 6-9-2-15-16z" fill="#f9ae3c"/></svg></button>
    <button class="dock-item running" aria-label="WhatsApp"><svg class="tile bg-green" viewBox="0 0 90 90"><path d="M15 75l4-17A32 32 0 1 1 32 70z" fill="none" stroke="#f8f8f8" stroke-width="6" stroke-linejoin="miter"/><path d="M33 29q4-2 6 2l3 7q1 2-3 6 5 10 14 13l4-5q2-1 4 0l6 4q2 2 1 4-4 8-13 7Q35 62 29 41q-1-8 4-12z" fill="#f8f8f8"/></svg><span class="badge">124</span></button>
  </div>
  <div class="dock-divider"></div>
  <button class="dock-window" aria-label="Minimized Finder window">
    <svg width="106" height="52" viewBox="0 0 106 52"><rect width="106" height="52" rx="3" fill="#1f1f20"/><path d="M0 0h18v52H0z" fill="#2e2e30"/><path d="M20 5h84M20 27h84" stroke="#3a3a3c" stroke-width="1"/><path d="M3 10h9M3 15h11M3 20h8M3 25h10M3 30h9M3 35h7" stroke="#58585c" stroke-width="1.500"/><path d="M22 12h8v6h-8zM35 12h8v6h-8zM50 33h7v5h-7zM63 33h7v5h-7z" fill="#9fa3b5"/><path d="M23 31h5v8h-5zM37 31h5v8h-5z" fill="#eee"/></svg>
    <svg class="mini-finder" viewBox="0 0 90 90"><use href="#finder"/></svg>
  </button>
  <button class="trash" aria-label="Trash"><svg width="82" height="104" viewBox="0 0 82 104"><path d="M2 16h76L67 96q-3 8-27 8t-27-8z" fill="url(#bin)"/><ellipse cx="40" cy="16" rx="38" ry="9" fill="#54585a"/><path d="M10 8l10-5 8 3 6-5 8 6 9-6 6 8 12 2 3 8-6 6-10-3-8 5-10-2-8 3-10-5-9 3z" fill="#e9ebec"/><path d="M18 10l8 8M46 4l6 14M60 12l-6 10" stroke="#6d7275" stroke-width="3"/><path d="M28 12h10v7H28z" fill="#4a9fd8"/><path d="M48 10h6v8h-6z" fill="#c2553f"/><path d="M20 26q6 40 4 68M58 26q0 40-8 74" stroke="#b5b9bb" stroke-width="3" fill="none" opacity=".4"/></svg></button>
</footer>
</body>
</html>
```
FILE: styles.css
```css
* {
  box-sizing: border-box;
}

body {
  margin: 0;
  height: 100vh;
  display: flex;
  flex-direction: column;
  overflow: hidden;
  font-family: Inter, "Noto Sans", sans-serif;
  color: #000;
  background:
    linear-gradient(to right, #000 0%, #050000 24%, #1c0000 40%, #3a0806 58%, #6a2530 72%, #8d7cb0 80%, #e4e2ee 86%, #000 87%, #0a0408 90%, #2c1631 100%) bottom / 100% 16px no-repeat,
    linear-gradient(to bottom, #000, #2c1631) right bottom / 160px 140px no-repeat,
    #000;
}

button {
  margin: 0;
  padding: 0;
  border: 0;
  background: none;
  font: inherit;
  color: inherit;
}

h1, h2, p {
  margin: 0;
}

svg {
  display: block;
  flex: none;
}

.defs {
  position: absolute;
  width: 0;
  height: 0;
}

/* Menu bar */
.menubar {
  flex: none;
  height: 74px;
  margin-bottom: 2px;
  padding: 0 34px 0 38px;
  display: flex;
  align-items: center;
  justify-content: space-between;
  background: linear-gradient(to right, #1f0c16, #1f0e18 45%, #1b070b 68%, #150204);
  color: #fff;
  font-size: 25px;
  font-weight: 500;
}

.menus {
  display: flex;
  align-items: center;
  gap: 42px;
}

.menu-app {
  font-weight: 700;
}

.status {
  display: flex;
  align-items: center;
  gap: 36px;
  color: #e9e3e4;
}

.stat {
  min-width: 52px;
  display: flex;
  flex-direction: column;
  color: #fff;
}

.stat-name {
  font-size: 18px;
  line-height: 22px;
  font-weight: 400;
  color: #3478f6;
}

.stat-value {
  font-size: 23px;
  line-height: 25px;
}

.stat-ping {
  align-items: center;
  gap: 5px;
}

.ping-dot {
  width: 16px;
  height: 16px;
  border-radius: 50%;
  background: #78b856;
}

.ping {
  font-size: 20px;
  line-height: 24px;
}

.weather {
  display: flex;
  align-items: center;
  gap: 12px;
}

.clock {
  display: flex;
  gap: 23px;
  font-size: 26px;
}

/* Browser window */
.window {
  position: relative;
  flex: 1;
  min-height: 0;
  display: flex;
  flex-direction: column;
  overflow: hidden;
  border-radius: 22px;
  background: #fff;
}

.window::after {
  content: "";
  position: absolute;
  inset: 0;
  border: 2px solid rgba(255, 255, 255, 0.3);
  border-bottom: 0;
  border-radius: 22px;
  pointer-events: none;
}

.tabbar {
  flex: none;
  height: 88px;
  display: flex;
  align-items: center;
  padding-right: 108px;
  background: #1c1b22;
  color: #b8b7bd;
  font-size: 22px;
}

.icon-btn {
  display: flex;
  align-items: center;
  justify-content: center;
}

.lights {
  display: flex;
  gap: 16px;
  padding-left: 26px;
}

.light {
  width: 24px;
  height: 24px;
  border-radius: 50%;
}

.light-red { background: #ed6a5f; }
.light-yellow { background: #f5bf4f; }
.light-green { background: #61c554; }

.view-btn {
  margin-left: 105px;
}

.tabs {
  align-self: stretch;
  display: flex;
  align-items: center;
  gap: 8px;
  margin: 0 30px 0 27px;
  padding-left: 8px;
  border-left: 2px solid #4d4c54;
}

.tab {
  width: 442px;
  height: 72px;
  display: flex;
  align-items: center;
  gap: 11px;
  padding: 0 23px 0 16px;
  border-radius: 8px;
}

.tab-active {
  background: #54525d;
  color: #fbfbfe;
  box-shadow: 0 0 8px rgba(0, 0, 0, 0.4);
}

.tab-title {
  flex: 1;
  min-width: 0;
  margin-right: -10px;
  padding-top: 3px;
  overflow: hidden;
  white-space: nowrap;
  mask-image: linear-gradient(to left, transparent, #000 12px);
}

.all-tabs {
  margin-left: auto;
}

.navbar {
  flex: none;
  height: 81px;
  display: flex;
  align-items: center;
  justify-content: space-between;
  padding: 0 36px 0 33px;
  background: #2b2a33;
  border-bottom: 1px solid #0b0b0e;
  color: #fbfbfe;
}

.nav-history {
  display: flex;
  gap: 42px;
}

.urlbar {
  width: 1956px;
  height: 64px;
  display: flex;
  align-items: center;
  gap: 26px;
  padding: 0 14px 0 16px;
  border-radius: 8px;
  background: #1c1b22;
}

.url {
  flex: 1;
  min-width: 0;
  padding: 0;
  border: 0;
  outline: 0;
  font: inherit;
  font-size: 27px;
  color: transparent;
  background: linear-gradient(to right, #fbfbfe 122px, #8f8e94 122px);
  background-clip: text;
}

.zoom-badge {
  padding: 0 14px;
  height: 39px;
  border-radius: 6px;
  background: #42414d;
  font-size: 22px;
  font-weight: 500;
}

.nav-tools {
  display: flex;
  gap: 43px;
}

/* Page, shown scrolled down by the --scrolled distance */
.viewport {
  --scrolled: 212px;
  flex: 1;
  min-height: 0;
  overflow: hidden;
  background: #fff;
}

.app {
  height: calc(100% - var(--scrolled));
  display: flex;
  background: #f3f4f6;
}

.sidebar {
  flex: none;
  width: 404px;
  display: flex;
  flex-direction: column;
  justify-content: space-between;
  background: linear-gradient(#295b32, #398140);
  color: #fff;
  box-shadow: 0 32px 40px -8px rgba(0, 0, 0, 0.1), 0 13px 16px -10px rgba(0, 0, 0, 0.1);
}

.side-nav {
  margin-top: -60px;
}

.side-link {
  height: 96px;
  display: flex;
  align-items: center;
  gap: 22px;
  padding-left: 26px;
  color: #fff;
  font-size: 26px;
  font-weight: 500;
  text-decoration: none;
}

.side-foot {
  padding: 25px;
  border-top: 2px solid #4a9a4e;
}

.logout {
  width: 100%;
  height: 63px;
  border-radius: 13px;
  background: #d32d24;
  color: #fff;
  font-size: 25px;
  font-weight: 600;
}

.main {
  flex: 1;
  min-width: 0;
  padding: 60px 39px 0;
}

.card {
  padding: 50px;
  border: 1px solid #e5e7eb;
  border-radius: 38px;
  background: #fff;
  box-shadow: 0 10px 30px rgba(0, 0, 0, 0.05);
}

.title {
  display: flex;
  align-items: center;
  gap: 6px;
  color: #1f2937;
  font-size: 36px;
  line-height: 54px;
  font-weight: 700;
}

.tracking {
  margin: 35px 0 36px;
  color: #6b7280;
  font-size: 22px;
  line-height: 32px;
}

.tracking-id {
  font-weight: 500;
}

.columns {
  display: grid;
  grid-template-columns: 1fr 1fr;
  gap: 38px;
  align-items: start;
}

.facts {
  display: flex;
  flex-direction: column;
  gap: 26px;
  padding-top: 2px;
  font-size: 27px;
  line-height: 44px;
}

.facts strong,
.doc-link {
  font-weight: 700;
}

.ai-used {
  display: flex;
  align-items: center;
  gap: 14px;
}

.doc-link {
  color: #000;
  text-decoration: none;
}

.progress {
  padding: 32px;
  border-radius: 19px;
  background: #f3f4f6;
}

.progress-title {
  display: flex;
  align-items: center;
  gap: 5px;
  color: #374151;
  font-size: 27px;
  line-height: 46px;
  font-weight: 600;
}

.chips {
  display: flex;
  align-items: center;
  gap: 19px;
  margin-top: 17px;
  font-size: 22px;
  font-weight: 500;
}

.chip {
  padding: 0 25px;
  line-height: 57px;
  border-radius: 29px;
}

.chip-green { background: #dffae7; color: #2f8042; }
.chip-yellow { background: #fdf8c8; color: #9a621e; }
.chip-blue { background: #dee8fb; color: #2449d8; }

.chip-current {
  margin: -1px 0 -1px -7px;
  padding: 0 26px;
  line-height: 59px;
  font-size: 23px;
  background: #384052;
  color: #fff;
  box-shadow: 0 17px 25px -5px rgba(0, 0, 0, 0.15);
}

.analyzer {
  max-width: 1026px;
  margin: 38px auto 0;
  padding: 31px;
  border: 1px solid #ddd;
  border-radius: 13px;
  box-shadow: 0 0 4px rgba(0, 0, 0, 0.08);
  font-size: 24px;
  line-height: 38px;
}

.analyzer-title {
  font-size: inherit;
  font-weight: 400;
  text-align: center;
}

.field {
  display: block;
  width: 100%;
  padding: 13px;
  border: 1px solid #ddd;
  border-radius: 6px;
  background: #fff;
}

.file-input {
  position: absolute;
  width: 1px;
  height: 1px;
  opacity: 0;
}

.btn {
  width: 100%;
  height: 70px;
  display: flex;
  align-items: center;
  justify-content: center;
  gap: 8px;
  border-radius: 6px;
  color: #fff;
}

.btn-done {
  margin: 15px 0 16px;
  background: #808080;
}

.question {
  position: relative;
}

.question-text {
  height: 103px;
  resize: none;
  font: inherit;
  color: inherit;
}

.grip {
  position: absolute;
  right: 2px;
  bottom: 2px;
}

.btn-ask {
  margin: 19px 0 31px;
  background: #54a551;
}

.answer {
  padding: 16px 22px 16px 16px;
  border: 1px solid #ddd;
  border-radius: 6px;
  background: #f9fafb;
}

.answer strong {
  font-weight: 700;
}

/* Dock */
.dock {
  position: relative;
  flex: none;
  height: 143px;
  margin: 4px 103px 9px 102px;
  padding: 0 24px 12px 19px;
  display: flex;
  align-items: center;
  justify-content: space-between;
  border: 2px solid rgba(255, 255, 255, 0.18);
  border-radius: 44px;
  background: linear-gradient(to right, #141414 0%, #151414 20%, #241212 32%, #2d1313 50%, #451818 66%, #55202a 73%, #45304a 79%, #504668 85%, #2b2630 89%, #1a1414 92%, #2c1a24 100%);
  box-shadow: 0 0 70px rgba(0, 0, 0, 0.3);
}

.dock-apps {
  flex: none;
  display: flex;
  gap: 30px;
}

.dock-item {
  position: relative;
  width: 90px;
  height: 90px;
}

.tile {
  position: relative;
  width: 90px;
  height: 90px;
  border-radius: 21px;
}

.running::after {
  content: "";
  position: absolute;
  left: 41px;
  top: 108px;
  width: 8px;
  height: 8px;
  border-radius: 50%;
  background: rgba(255, 235, 245, 0.62);
}

.badge {
  position: absolute;
  top: -11px;
  right: -15px;
  min-width: 44px;
  height: 44px;
  padding: 0 6px;
  border-radius: 22px;
  background: #e34b3d;
  color: #fff;
  font-size: 23px;
  line-height: 44px;
  text-align: center;
}

.bg-gray { background: #b2b3b3; }
.bg-silver { background: linear-gradient(#fff, #d5d5d5); }
.bg-green { background: linear-gradient(#87f07f, #59bd47); }
.bg-mail { background: linear-gradient(#3768e8, #5dc4f8); }
.bg-white { background: #fff; }
.bg-contacts { background: linear-gradient(#ad8f58, #91703f); }
.bg-notes { background: linear-gradient(#fff, #e2e2de); }
.bg-music { background: linear-gradient(#ec6678, #e63943); }
.bg-orange { background: linear-gradient(#f4b84c, #ee8a38); }
.bg-blue { background: linear-gradient(#54b4ef, #2956d3); }
.bg-settings { background: linear-gradient(#d5dde2, #8d8b88); }
.bg-black { background: #1f1f1f; }
.bg-taupe { background: linear-gradient(#bdb2b6, #c1b9ba); }
.bg-purple { background: linear-gradient(#8a3bb0, #552a85); }
.bg-navy { background: #1f1338; }

.petals ellipse {
  mix-blend-mode: multiply;
  opacity: 0.92;
}

.contact-tabs {
  position: absolute;
  left: 86px;
  top: 10px;
  width: 12px;
  height: 72px;
}

.hammer {
  position: absolute;
  left: -2px;
  top: -9px;
  width: 104px;
  height: 104px;
}

.dock-divider {
  width: 2px;
  height: 106px;
  margin-left: 10px;
  background: rgba(255, 255, 255, 0.3);
}

.dock-window {
  position: relative;
}

.mini-finder {
  position: absolute;
  right: 2px;
  bottom: -24px;
  width: 34px;
  height: 34px;
  border-radius: 7px;
}
```
